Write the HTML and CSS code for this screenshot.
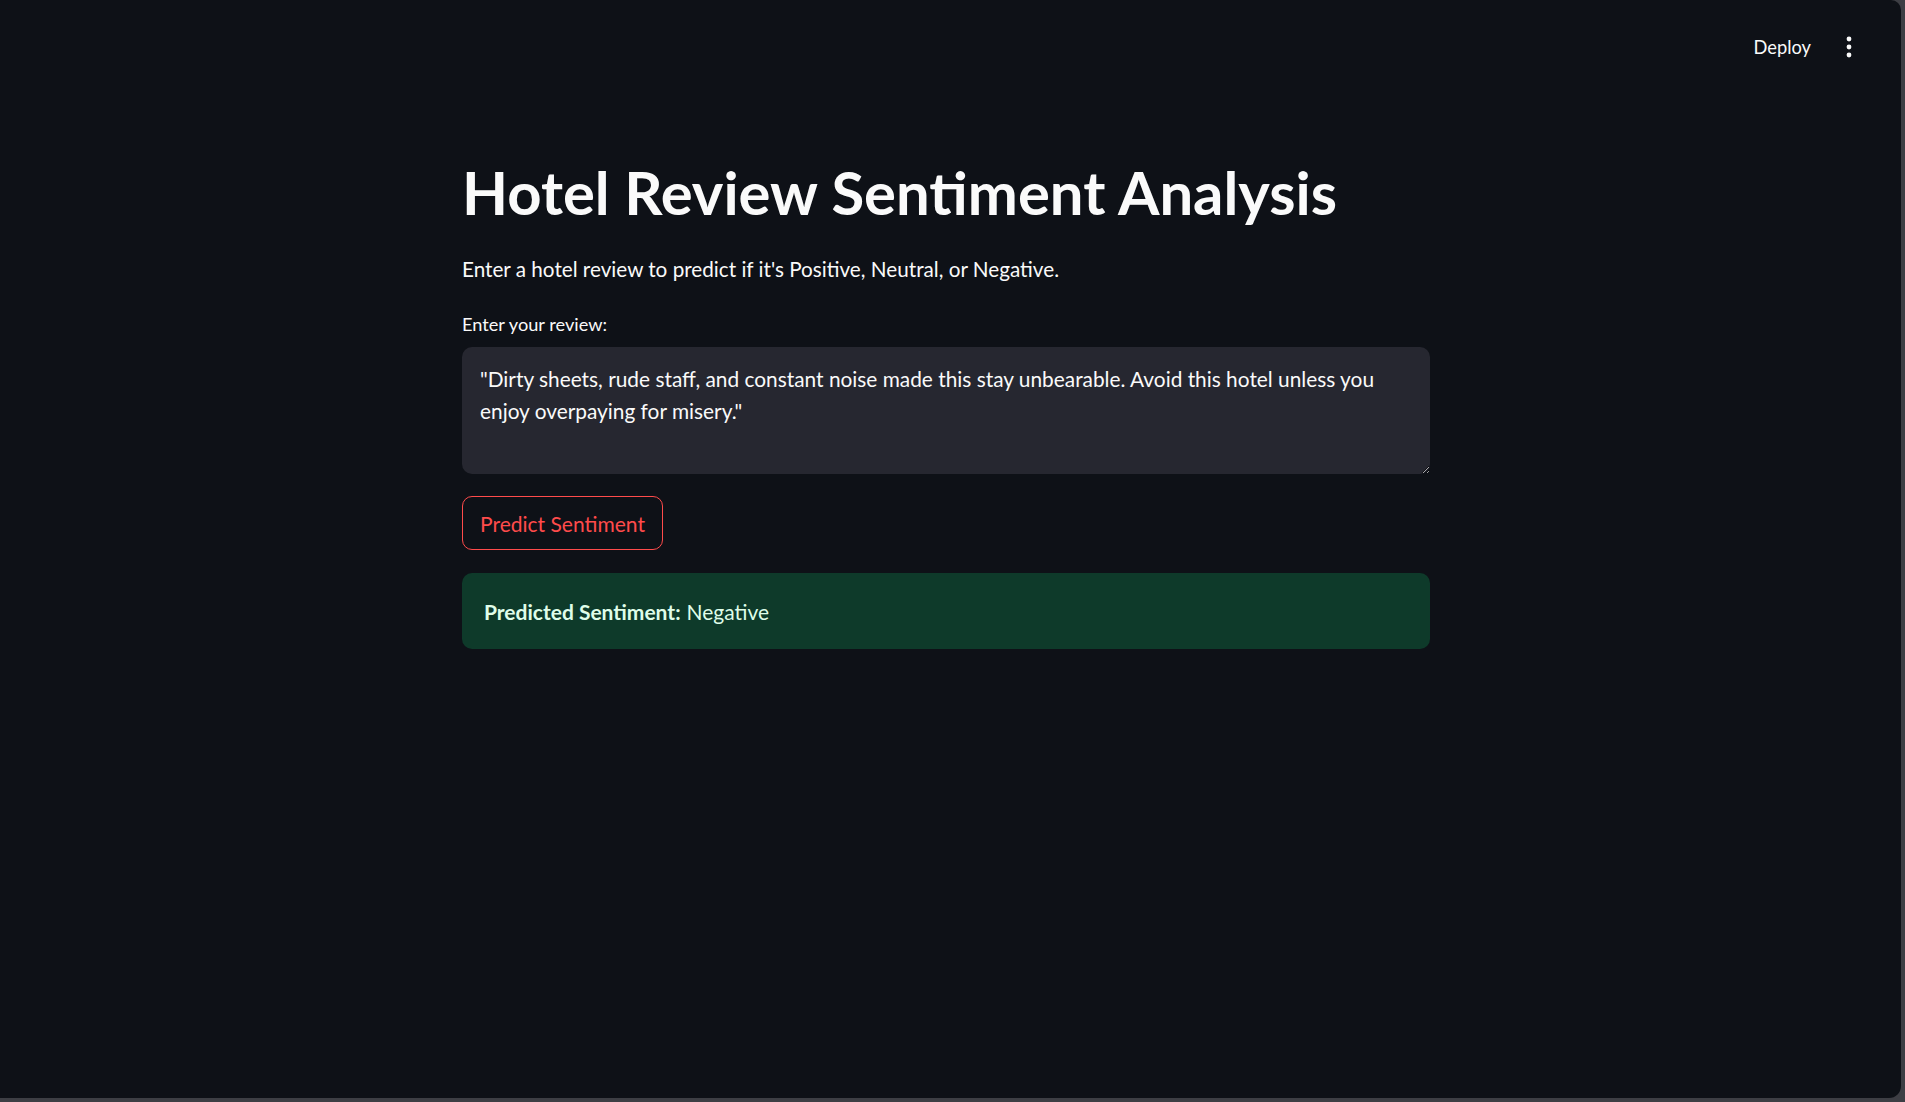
FILE: index.html
```html
<!DOCTYPE html>
<html lang="en">
<head>
<meta charset="utf-8">
<title>Hotel Review Sentiment Analysis</title>
<link rel="stylesheet" href="styles.css">
</head>
<body>
<div class="app">
  <header class="topbar">
    <button class="deploy">Deploy</button>
    <button class="menu" aria-label="Main menu">
      <svg width="8" height="22" viewBox="0 0 8 22"><circle cx="4" cy="3" r="2.4" fill="#fafafa"/><circle cx="4" cy="11" r="2.4" fill="#fafafa"/><circle cx="4" cy="19" r="2.4" fill="#fafafa"/></svg>
    </button>
  </header>
  <main class="main">
    <h1 class="title">Hotel Review Sentiment Analysis</h1>
    <p class="intro">Enter a hotel review to predict if it's Positive, Neutral, or Negative.</p>
    <label class="label" for="review">Enter your review:</label>
    <textarea id="review" class="review">"Dirty sheets, rude staff, and constant noise made this stay unbearable. Avoid this hotel unless you enjoy overpaying for misery."</textarea>
    <button class="predict">Predict Sentiment</button>
    <div class="alert"><strong>Predicted Sentiment:</strong> Negative</div>
  </main>
</div>
</body>
</html>
```
FILE: styles.css
```css
html, body {
  margin: 0;
  padding: 0;
  height: 100%;
}
body {
  background: #3d3e44;
  font-family: Lato, "Open Sans", sans-serif;
  color: #fafafa;
  overflow: hidden;
}
.app {
  width: 1901px;
  height: 1098px;
  background: #0e1117;
  border-radius: 0 10px 12px 0;
  display: flex;
  flex-direction: column;
  color-scheme: dark;
}
.topbar {
  height: 94px;
  display: flex;
  justify-content: flex-end;
  align-items: center;
  gap: 34px;
  padding-right: 48px;
}
.deploy {
  background: none;
  border: none;
  color: #fafafa;
  font-family: Lato, sans-serif;
  font-size: 18.3px;
  padding: 0;
  cursor: pointer;
}
.menu {
  background: none;
  border: none;
  padding: 0;
  display: flex;
  align-items: center;
}
.main {
  width: 968px;
  margin: 62px 0 0 462px;
  display: flex;
  flex-direction: column;
  align-items: flex-start;
}
.title {
  margin: 0;
  font-size: 59.8px;
  font-weight: 700;
  line-height: 72px;
}
.intro {
  margin: 23.5px 0 0;
  font-size: 20.7px;
  line-height: 35px;
}
.label {
  margin-top: 22.5px;
  font-size: 18.2px;
  line-height: 30px;
}
.review {
  margin-top: 8px;
  box-sizing: border-box;
  width: 968px;
  height: 127px;
  background: #262730;
  border: none;
  border-radius: 10px;
  color: #fafafa;
  font-family: Lato, sans-serif;
  font-size: 20.85px;
  line-height: 31.5px;
  padding: 16px 18px;
  resize: vertical;
  outline: none;
}
.predict {
  margin-top: 22px;
  width: 201px;
  height: 54px;
  background: transparent;
  border: 1px solid #ff4b4b;
  border-radius: 10px;
  color: #ff4b4b;
  font-family: Lato, sans-serif;
  font-size: 21px;
  cursor: pointer;
}
.alert {
  margin-top: 23px;
  box-sizing: border-box;
  width: 968px;
  height: 76px;
  background: #0e3a2a;
  border-radius: 10px;
  padding: 0 22px;
  display: flex;
  align-items: center;
  color: #dffde9;
  font-size: 21px;
}
.alert strong {
  font-weight: 700;
  margin-right: 6px;
}
```
